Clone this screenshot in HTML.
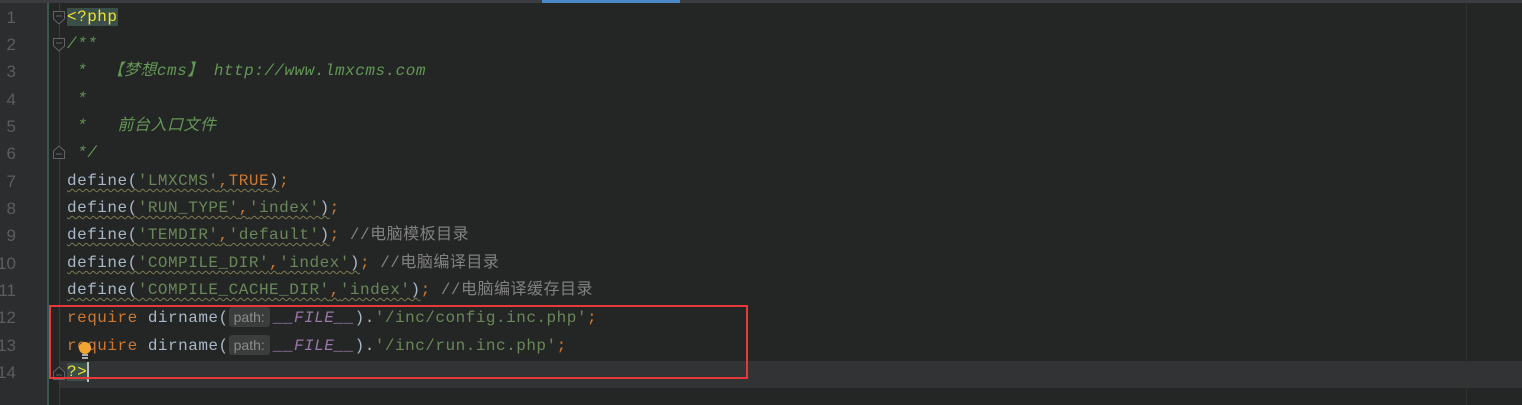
<!DOCTYPE html>
<html><head><meta charset="utf-8"><style>
body{margin:0;width:1522px;height:405px;background:#242625;overflow:hidden;position:relative;font-family:"Liberation Mono","Noto Sans CJK SC",monospace;}
.top{position:absolute;left:0;top:0;width:1522px;height:3px;background:#3a3c3f}
.tab{position:absolute;left:542px;top:0;width:138px;height:3px;background:#4a88c7}
.gut{position:absolute;left:0;top:3px;width:48px;height:402px;background:#2b2d2e}
.gl{position:absolute;left:47px;top:3px;width:2px;height:402px;background:#3d5550}
.fl{position:absolute;left:59px;top:3px;width:1px;height:402px;background:#3a3c3e}
.rm{position:absolute;left:1466px;top:3px;width:1px;height:402px;background:#303232}
.cur{position:absolute;left:60px;top:361px;width:1462px;height:27px;background:#313335}
.ln{position:absolute;left:-22px;width:38px;text-align:right;color:#5a5e61;font-size:17px;font-family:"Liberation Sans",sans-serif;line-height:27px}
.c{position:absolute;left:67px;font-size:16px;letter-spacing:0.5px;line-height:27px;color:#a9b7c6;white-space:pre}
.k{color:#cc7832}.s{color:#6a8759}.dc{color:#629755;font-style:italic}.cm{color:#808080}
.p{color:#9876aa;font-style:italic}
.u{text-decoration:underline wavy #7a7a50;text-decoration-thickness:1px;text-underline-offset:3px}
.h{background:#3b3d3d;color:#8a8c8c;font-family:"Liberation Sans",sans-serif;font-size:14px;letter-spacing:0;padding:2px 5px;border-radius:3px;margin-right:4px}
.php{background:#3a4f48;color:#f0e030}
.box{position:absolute;left:49px;top:305px;width:695px;height:70px;border:2px solid #e8393a}
.fold{position:absolute;left:53px}
</style></head><body>
<div class="top"></div><div class="tab"></div>
<div class="gut"></div><div class="gl"></div>
<div class="cur"></div>
<div class="fl"></div><div class="rm"></div>
<svg class="fold" style="top:11px" width="12" height="14"><path d="M0.5 0.5H11.5V8L6 13L0.5 8Z" fill="#242625" stroke="#606366"/><path d="M3 5H9" stroke="#606366"/></svg>
<svg class="fold" style="top:38px" width="12" height="14"><path d="M0.5 0.5H11.5V8L6 13L0.5 8Z" fill="#242625" stroke="#606366"/><path d="M3 5H9" stroke="#606366"/></svg>
<svg class="fold" style="top:145px" width="12" height="14"><path d="M0.5 13.5H11.5V6L6 1L0.5 6Z" fill="#242625" stroke="#606366"/><path d="M3 9H9" stroke="#606366"/></svg>
<svg class="fold" style="top:366px" width="12" height="14"><path d="M0.5 13.5H11.5V6L6 1L0.5 6Z" fill="#242625" stroke="#606366"/><path d="M3 9H9" stroke="#606366"/></svg>
<div class="ln" style="top:4px">1</div>
<div class="ln" style="top:31px">2</div>
<div class="ln" style="top:58px">3</div>
<div class="ln" style="top:86px">4</div>
<div class="ln" style="top:113px">5</div>
<div class="ln" style="top:140px">6</div>
<div class="ln" style="top:168px">7</div>
<div class="ln" style="top:195px">8</div>
<div class="ln" style="top:222px">9</div>
<div class="ln" style="top:250px">10</div>
<div class="ln" style="top:277px">11</div>
<div class="ln" style="top:304px">12</div>
<div class="ln" style="top:332px">13</div>
<div class="ln" style="top:359px">14</div>
<div class="c" style="top:4px"><span class="php">&lt;?php</span></div>
<div class="c dc" style="top:31px">/**</div>
<div class="c dc" style="top:58px"> *  【梦想cms】 http://www.lmxcms.com</div>
<div class="c dc" style="top:86px"> *</div>
<div class="c dc" style="top:113px"> *   前台入口文件</div>
<div class="c dc" style="top:140px"> */</div>
<div class="c" style="top:168px"><span class="u">define(<span class="s">'LMXCMS'</span><span class="k">,TRUE</span>)</span><span class="k">;</span></div>
<div class="c" style="top:195px"><span class="u">define(<span class="s">'RUN_TYPE'</span><span class="k">,</span><span class="s">'index'</span>)</span><span class="k">;</span></div>
<div class="c" style="top:222px"><span class="u">define(<span class="s">'TEMDIR'</span><span class="k">,</span><span class="s">'default'</span>)</span><span class="k">;</span> <span class="cm">//电脑模板目录</span></div>
<div class="c" style="top:250px"><span class="u">define(<span class="s">'COMPILE_DIR'</span><span class="k">,</span><span class="s">'index'</span>)</span><span class="k">;</span> <span class="cm">//电脑编译目录</span></div>
<div class="c" style="top:277px"><span class="u">define(<span class="s">'COMPILE_CACHE_DIR'</span><span class="k">,</span><span class="s">'index'</span>)</span><span class="k">;</span> <span class="cm">//电脑编译缓存目录</span></div>
<div class="c" style="top:304px"><span class="k">require</span> dirname(<span class="h">path:</span><span class="p">__FILE__</span>).<span class="s">'/inc/config.inc.php'</span><span class="k">;</span></div>
<div class="c" style="top:332px"><span class="k">require</span> dirname(<span class="h">path:</span><span class="p">__FILE__</span>).<span class="s">'/inc/run.inc.php'</span><span class="k">;</span></div>
<div class="c" style="top:359px"><span class="php">?&gt;</span><span style="display:inline-block;width:2px;height:20px;background:#bbb;vertical-align:middle"></span></div>
<svg style="position:absolute;left:77px;top:341px" width="16" height="20"><circle cx="8" cy="7" r="6" fill="#f0a732"/><rect x="5" y="13" width="6" height="2" fill="#aaa"/><rect x="5" y="16" width="6" height="2" fill="#aaa"/></svg>
<div class="box"></div>
</body></html>
